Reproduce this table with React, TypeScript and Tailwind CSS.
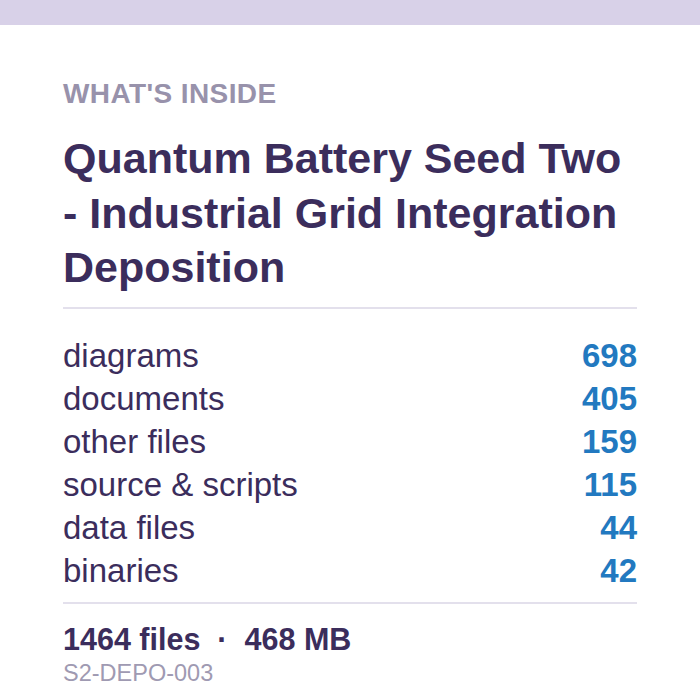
const rows: [string, number][] = [
  ['diagrams', 698],
  ['documents', 405],
  ['other files', 159],
  ['source & scripts', 115],
  ['data files', 44],
  ['binaries', 42],
];

export default function App() {
  return (
    <div className="min-h-[700px] bg-white font-['Liberation_Sans',Arial,sans-serif] text-[#3b2d5c]">
      <div className="h-[25px] bg-[#d8d1e8]" />

      <div className="px-[63px] pt-[51.5px]">
        <div className="text-[28px] leading-[1.2] font-bold tracking-[0.4px] text-[#9892ab]">
          WHAT&apos;S INSIDE
        </div>

        <h1 className="mt-[21px] text-[43px] leading-[54.5px] font-bold">
          Quantum Battery Seed Two - Industrial Grid Integration Deposition
        </h1>

        <div className="mt-[12px] h-[2px] bg-[#e3e0ec]" />

        <div className="mt-[25.5px]">
          {rows.map(([label, count]) => (
            <div key={label} className="flex justify-between text-[33px] leading-[43px]">
              <span>{label}</span>
              <span className="font-bold text-[#2279c0]">{count}</span>
            </div>
          ))}
        </div>

        <div className="mt-[10px] h-[2px] bg-[#e3e0ec]" />

        <div className="mt-[17px] flex items-center gap-[17px] text-[30.5px] leading-[1.2] font-bold">
          <span>1464 files</span>
          <span>·</span>
          <span>468 MB</span>
        </div>
        <div className="mt-[1px] text-[23.5px] leading-[1.2] text-[#9f9ab2]">
          S2-DEPO-003
        </div>
      </div>
    </div>
  );
}
